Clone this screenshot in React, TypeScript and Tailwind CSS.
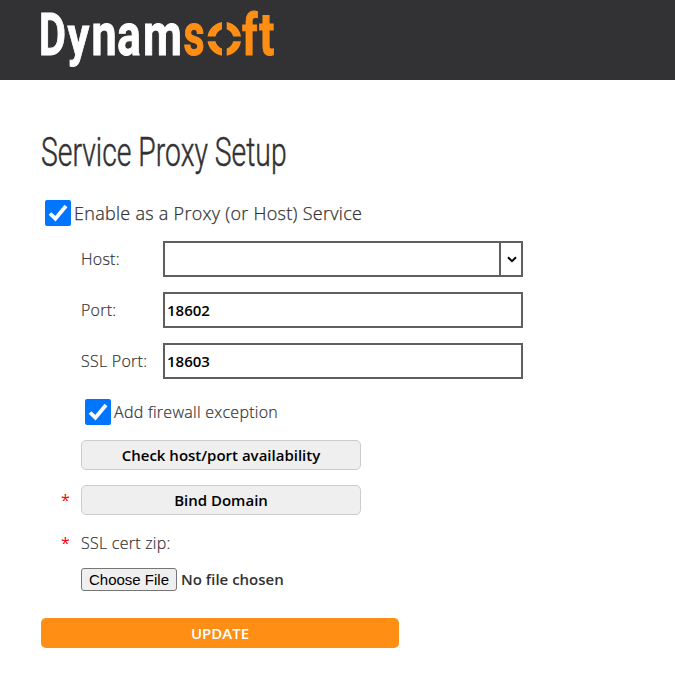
import React from 'react';

type LetterProps = {
  char: string;
  left: number;
  right: number;
  min: number;
  max: number;
  color: string;
  tall?: number;
};

// Fits one bold letter between two horizontal edges; min and max are its ink bounds in em/2048.
function Letter({ char, left, right, min, max, color, tall = 1 }: LetterProps) {
  const size = 59;
  const scale = (right - left - 0.8) / (((max - min) * size) / 2048);
  const x = left + 0.4 - ((min * size) / 2048) * scale;
  return (
    <text
      transform={`translate(${x} 54.6) scale(${scale} ${tall})`}
      fontFamily="Roboto, sans-serif"
      fontSize={size}
      fontWeight={700}
      fill={color}
      stroke={color}
      strokeWidth="1"
    >
      {char}
    </text>
  );
}

function Logo() {
  const w = '#ffffff';
  const o = '#ff8e14';
  return (
    <svg width="300" height="80" viewBox="0 0 300 80" role="img" aria-label="Dynamsoft">
      <Letter char="D" left={41} right={64} min={119} max={1216} color={w} />
      <Letter char="y" left={67.2} right={89.6} min={6} max={1029} color={w} tall={0.95} />
      <Letter char="n" left={93.3} right={114} min={106} max={1015} color={w} />
      <Letter char="a" left={118.2} right={139.8} min={59} max={1031} color={w} />
      <Letter char="m" left={145} right={179.8} min={106} max={1658} color={w} />
      <Letter char="s" left={184.2} right={203.8} min={52} max={990} color={o} />
      <g fill={o}>
        <path d="M222 22v7.2c-3.2 1.2-5.7 3.9-6.5 7.3H207.5C208.6 29.2 214.5 23.1 222 22Z" />
        <path d="M226.7 22v7.2c3.2 1.2 5.7 3.9 6.5 7.3H241C239.9 29.2 234.2 23.1 226.7 22Z" />
        <path d="M222 55.8v-7.2c-3.2-1.2-5.7-3.9-6.5-7.3H207.5C208.6 48.6 214.5 54.7 222 55.8Z" />
        <path d="M226.7 55.8v-7.2c3.2-1.2 5.7-3.9 6.5-7.3H241C239.9 48.6 234.2 54.7 226.7 55.8Z" />
      </g>
      <Letter char="f" left={242} right={257.6} min={22} max={720} color={o} tall={0.96} />
      <Letter char="t" left={259} right={274} min={12} max={665} color={o} />
    </svg>
  );
}

function CheckBox() {
  return (
    <span className="flex size-[26px] shrink-0 items-center justify-center rounded-[2px] bg-[#0075ff]">
      <svg width="26" height="26" viewBox="0 0 26 26" fill="none" stroke="#fff" strokeWidth="3.8">
        <path d="M5 13.5L10.4 18.7L21 6" />
      </svg>
    </span>
  );
}

const inputClass =
  'h-9 w-[360px] border-2 border-[#5f5f5f] bg-white px-0.5 text-[15px] leading-8 font-semibold text-black outline-none';
const buttonClass =
  'h-[30px] w-[280px] rounded-[5px] border border-[#ccc] bg-[#efefef] text-[15px] leading-7 font-semibold text-black';

export default function App() {
  return (
    <div className="h-[700px] w-[675px] overflow-hidden bg-white font-['Open_Sans',sans-serif] text-base text-[#323234]">
      <header className="h-20 bg-[#323234]">
        <Logo />
      </header>
      <main className="pl-[41px]">
        <h1 className="mt-[49px] h-[47px] w-[360px] origin-left scale-x-[0.708] font-[Roboto,sans-serif] text-[40px] leading-[47px] font-light whitespace-nowrap [-webkit-text-stroke:0.5px_#323234]">
          Service Proxy Setup
        </h1>
        <label className="mt-6 ml-1 flex h-[26px] items-center gap-[3px] text-lg font-light">
          <CheckBox />
          <span className="tracking-[0.28px] [-webkit-text-stroke:0.25px_#323234]">
            Enable as a Proxy (or Host) Service
          </span>
        </label>
        <div className="mt-[15px] ml-10 flex flex-col gap-[15px] font-light">
          <div className="flex h-9 items-center">
            <span className="w-[82px] tracking-[0.25px] [-webkit-text-stroke:0.2px_#323234]">Host:</span>
            <div className="flex h-9 w-[360px] border-2 border-[#5f5f5f]">
              <div className="flex-1" />
              <div className="flex w-[22px] items-center justify-center border-l-2 border-[#5f5f5f] pl-px">
                <svg width="10" height="7" viewBox="0 0 10 7" fill="none" stroke="#000" strokeWidth="2">
                  <path d="M1 1.3L5 5.2L9 1.3" />
                </svg>
              </div>
            </div>
          </div>
          <div className="flex h-9 items-center">
            <span className="w-[82px] tracking-[0.25px] [-webkit-text-stroke:0.2px_#323234]">Port:</span>
            <input className={inputClass} defaultValue="18602" />
          </div>
          <div className="flex h-9 items-center">
            <span className="w-[82px] tracking-[0.25px] [-webkit-text-stroke:0.2px_#323234]">SSL Port:</span>
            <input className={inputClass} defaultValue="18603" />
          </div>
        </div>
        <label className="mt-5 ml-11 flex h-[26px] items-center gap-[3px] font-light">
          <CheckBox />
          <span className="tracking-[0.27px] [-webkit-text-stroke:0.2px_#323234]">Add firewall exception</span>
        </label>
        <div className="mt-[15px] ml-10">
          <button className={buttonClass}>Check host/port availability</button>
        </div>
        <div className="mt-[15px] ml-5 flex h-[30px] items-center">
          <span className="w-5 text-[#f00]">*</span>
          <button className={buttonClass}>Bind Domain</button>
        </div>
        <div className="mt-4 ml-5 flex h-6 items-center font-light">
          <span className="w-5 font-normal text-[#f00]">*</span>
          <span className="tracking-[0.25px] [-webkit-text-stroke:0.2px_#323234]">SSL cert zip:</span>
        </div>
        <div className="mt-[13px] ml-10 flex h-[23px] items-center gap-1 text-[15px] font-semibold">
          <button className="h-[23px] w-24 rounded-[3px] border border-[#767676] bg-[#efefef] font-['Liberation_Sans',sans-serif] text-[15px] leading-5 font-normal whitespace-nowrap text-black">
            Choose File
          </button>
          <span>No file chosen</span>
        </div>
        <button className="mt-[27px] block h-[30px] w-[358px] rounded-[5px] bg-[#ff8e14] text-[15px] leading-[29px] font-semibold text-white">
          UPDATE
        </button>
      </main>
    </div>
  );
}
